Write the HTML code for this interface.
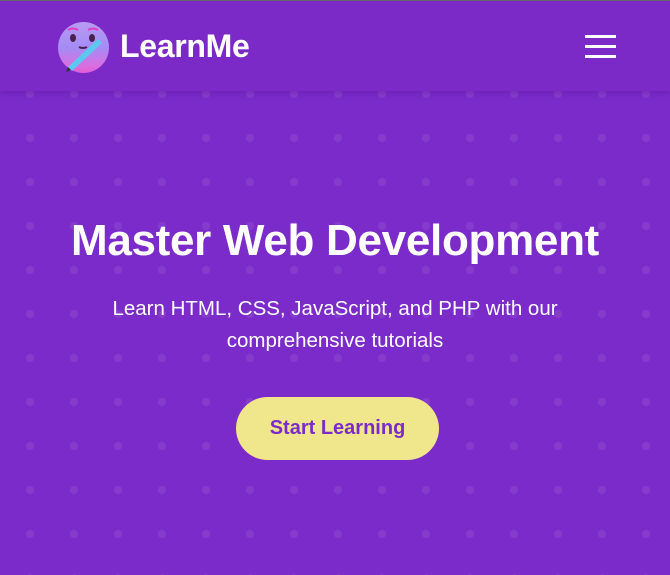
<!DOCTYPE html>
<html><head><meta charset="utf-8"><style>
*{margin:0;padding:0;box-sizing:border-box}
html,body{width:670px;height:575px;overflow:hidden}
body{background-color:#7b2bc9;background-image:radial-gradient(circle,#853ccd 3.5px,transparent 4.5px);background-size:44px 44px;background-position:8px 72px;font-family:"Liberation Sans",sans-serif;position:relative}
.hdr{position:absolute;top:0;left:0;width:670px;height:91px;background:#7b2ac8;border-top:1px solid #666;box-shadow:0 2px 6px rgba(60,0,110,.25)}
.logo{position:absolute;left:58px;top:21px;width:51px;height:51px;border-radius:50%;background:linear-gradient(180deg,#b79cf0 0%,#a48cf5 50%,#d86fe0 85%,#e25bd6 100%)}
.brand{position:absolute;left:120px;top:27px;color:#fff;font-weight:bold;font-size:32px;letter-spacing:-0.3px}
.bar{position:absolute;left:585px;width:31px;height:3px;background:#fff}
h1{position:absolute;left:0;width:670px;top:216px;text-align:center;color:#fff;font-size:44px;font-weight:bold;letter-spacing:-0.3px}
p{position:absolute;left:0;width:670px;top:293px;text-align:center;color:#fff;font-size:20.5px;line-height:32px}
.btn{position:absolute;left:236px;top:397px;width:203px;height:63px;border-radius:32px;background:#f0e68c;color:#7b2bc9;font-size:20px;font-weight:bold;text-align:center;line-height:63px}
</style></head><body>
<div class="hdr">
<div class="logo"><svg width="51" height="51" viewBox="0 0 51 51"><path d="M10 8 Q15 5 20 8" stroke="#e03cc8" stroke-width="2" fill="none"/><path d="M30 8 Q35 5 40 8" stroke="#e03cc8" stroke-width="2" fill="none"/><ellipse cx="15" cy="16" rx="3" ry="4" fill="#4a2050"/><ellipse cx="34" cy="16" rx="3" ry="4" fill="#4a2050"/><path d="M21 25 Q25 27 29 25" stroke="#4a2050" stroke-width="2" fill="none"/><path d="M10 45 L40 17 L44 21 L14 49 Z" fill="#5cc8f0"/><path d="M10 45 L8 50 L13 48Z" fill="#333"/></svg></div>
<div class="brand">LearnMe</div>
<div class="bar" style="top:34px"></div><div class="bar" style="top:44px"></div><div class="bar" style="top:54px"></div>
</div>
<h1>Master Web Development</h1>
<p>Learn HTML, CSS, JavaScript, and PHP with our<br>comprehensive tutorials</p>
<div class="btn">Start Learning</div>
</body></html>
